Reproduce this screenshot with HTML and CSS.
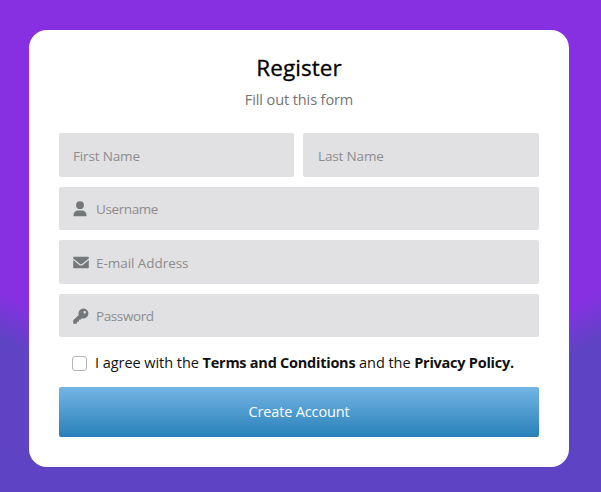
FILE: index.html
```
<!DOCTYPE html>
<html lang="en">
<head>
<meta charset="utf-8">
<title>Register</title>
<link rel="stylesheet" href="styles.css">
</head>
<body>
<form class="card">
  <h1 class="title">Register</h1>
  <p class="subtitle">Fill out this form</p>
  <div class="fields">
    <div class="row">
      <label class="field"><input class="first" type="text" placeholder="First Name"></label>
      <label class="field"><input class="last" type="text" placeholder="Last Name"></label>
    </div>
    <label class="field">
      <svg class="icon" viewBox="0 0 16 16"><circle cx="7" cy="4.200" r="3.900"/><path d="M.5 15.200v-1.100C.5 11.300 2.600 9.400 5.200 9.400h3.600c2.600 0 4.700 1.900 4.700 4.700v1.100z"/></svg>
      <input class="username" type="text" placeholder="Username">
    </label>
    <label class="field">
      <svg class="icon" viewBox="0 0 16 16"><path d="M.6 1.800h14.800c.2 0 .4.200.4.400v1.400L9.300 8.800a2 2 0 0 1-2.600 0L.2 3.600V2.200c0-.2.200-.4.400-.4zM.2 5l5.700 4.700a3.300 3.300 0 0 0 4.200 0L15.800 5v7.800c0 .2-.2.400-.4.400H.6c-.2 0-.4-.2-.4-.4z"/></svg>
      <input class="email" type="text" placeholder="E-mail Address">
    </label>
    <label class="field">
      <svg class="icon" viewBox="0 0 16 16"><path fill-rule="evenodd" d="M10.500.5a5 5 0 1 1-1.500 9.800l-1.300 1.300c-.2.1-.4.2-.6.200H6v1.300c0 .4-.3.700-.7.700H4v1.200c0 .4-.3.700-.7.700H.9c-.4 0-.7-.3-.7-.7v-2.400c0-.2.100-.4.200-.6l5.300-5A5 5 0 0 1 10.500.5zM11.700 3a1.250 1.250 0 1 0 0 2.500 1.250 1.250 0 0 0 0-2.500z"/></svg>
      <input class="password" type="password" placeholder="Password">
    </label>
  </div>
  <label class="agree">
    <input class="check" type="checkbox">
    <span class="terms">I agree with the <b>Terms and Conditions</b> and the <b>Privacy Policy.</b></span>
  </label>
  <button class="submit" type="button">Create Account</button>
</form>
</body>
</html>
```

FILE: styles.css
```
* {
  box-sizing: border-box;
}

body {
  margin: 0;
  min-height: 492px;
  padding: 30px 32px 25px 29px;
  background: radial-gradient(circle at 300px -187px, #8730e2 564px, #5f43c5 604px);
  font-family: "Segoe UI", "Open Sans", "Noto Sans", sans-serif;
  color: #111;
}

.card {
  width: 540px;
  height: 437px;
  padding: 23px 30px 30px;
  border-radius: 18px;
  background: #fff;
}

.title {
  margin: 0;
  font-size: 22.500px;
  font-weight: 500;
  line-height: 30px;
  letter-spacing: 0.05px;
  text-align: center;
  color: #000;
  -webkit-text-stroke: 0.3px #000;
}

.subtitle {
  margin: 7px 0 0;
  font-size: 14.500px;
  line-height: 20px;
  letter-spacing: -0.1px;
  text-align: center;
  color: #747474;
}

.fields {
  display: grid;
  gap: 10px;
  margin-top: 23px;
}

.row {
  display: grid;
  grid-template-columns: 235px 236px;
  gap: 9px;
}

.field {
  display: flex;
  align-items: center;
  gap: 7px;
  height: 43.5px;
  padding: 0 15px 0 14px;
  border-radius: 2px;
  background: #e1e1e3;
}

.field input {
  flex: 1;
  min-width: 0;
  padding: 2px 0 0;
  border: 0;
  outline: 0;
  background: transparent;
  font: 13.500px/20px "Segoe UI", "Open Sans", "Noto Sans", sans-serif;
  letter-spacing: -0.15px;
}

.field input::placeholder {
  color: #8c8c8e;
}

.field .last {
  padding-left: 1px;
}

.field .username,
.field .password {
  letter-spacing: -0.4px;
}

.field .email {
  letter-spacing: -0.05px;
}

.icon {
  width: 16px;
  height: 16px;
  margin-top: 2px;
  fill: #75787a;
}

.agree {
  display: flex;
  align-items: center;
  gap: 8px;
  height: 20px;
  margin: 16px 0 14px 13px;
}

.check {
  appearance: none;
  width: 15px;
  height: 15px;
  margin: 1px 0 0;
  border: 1px solid #b5b5b5;
  border-radius: 3px;
  background: #fff;
}

.terms {
  font-size: 14.500px;
  line-height: 20px;
  letter-spacing: -0.05px;
  white-space: nowrap;
}

.terms b {
  font-weight: 700;
  letter-spacing: -0.25px;
}

.submit {
  display: block;
  width: 480px;
  height: 50px;
  padding: 0;
  border: 0;
  border-radius: 2px;
  background: linear-gradient(#73b5e4, #2980b9);
  color: #fff;
  font: 14.500px/20px "Segoe UI", "Open Sans", "Noto Sans", sans-serif;
  letter-spacing: -0.15px;
}
```
